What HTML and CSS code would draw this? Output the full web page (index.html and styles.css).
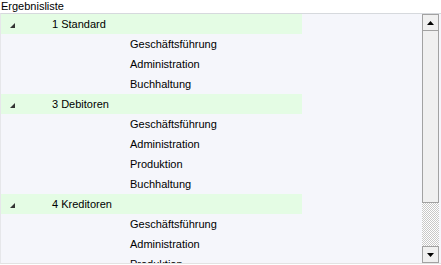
FILE: index.html
```html
<!doctype html>
<html>
<head>
	<title>Ergebnisliste</title>
	<meta charset="utf-8"/>
	<link rel="stylesheet" href="styles.css">
</head>
<body>

	<div class="caption">Ergebnisliste</div>

	<div class="panel">
		<div class="list">
			<div class="group">
				<svg class="toggle" width="5" height="5" viewBox="0 0 5 5"><polygon points="5,0 5,5 0,5"/></svg>
				<span>1 Standard</span>
			</div>
			<div class="item">Geschäftsführung</div>
			<div class="item">Administration</div>
			<div class="item">Buchhaltung</div>

			<div class="group">
				<svg class="toggle" width="5" height="5" viewBox="0 0 5 5"><polygon points="5,0 5,5 0,5"/></svg>
				<span>3 Debitoren</span>
			</div>
			<div class="item">Geschäftsführung</div>
			<div class="item">Administration</div>
			<div class="item">Produktion</div>
			<div class="item">Buchhaltung</div>

			<div class="group">
				<svg class="toggle" width="5" height="5" viewBox="0 0 5 5"><polygon points="5,0 5,5 0,5"/></svg>
				<span>4 Kreditoren</span>
			</div>
			<div class="item">Geschäftsführung</div>
			<div class="item">Administration</div>
			<div class="item">Produktion</div>
			<div class="item">Buchhaltung</div>
		</div>

		<div class="scrollbar">
			<div class="btn"><svg width="7" height="4" viewBox="0 0 7 4"><polygon points="3.5,0 7,4 0,4"/></svg></div>
			<div class="thumb"></div>
			<div class="track"></div>
			<div class="btn"><svg width="7" height="4" viewBox="0 0 7 4"><polygon points="0,0 7,0 3.5,4"/></svg></div>
		</div>
	</div>

</body>
</html>
```

FILE: styles.css
```css
* {
    margin: 0;
    box-sizing: border-box;
}

body {
    width: 441px;
    height: 265px;
    overflow: hidden;
    background-color: #fff;
    font-family: "Liberation Sans", Arial, sans-serif;
    font-size: 11px;
    color: #000;
}

.caption {
    height: 13px;
    line-height: 13px;
    padding-left: 1px;
}

.panel {
    display: flex;
    height: 251px;
    border-top: 1px solid #d6d9dd;
    border-left: 1px solid #e6e7ea;
    border-bottom: 1px solid #e3e3e3;
    background-color: #f5f6fb;
}

.list {
    flex: 1;
    overflow: hidden;
}

.group {
    display: flex;
    align-items: center;
    width: 301px;
    height: 20px;
    background-color: #e4fce4;
}

.toggle {
    margin: 2px 0 0 9px;
    fill: #333;
}

.group span {
    margin-left: 37px;
}

.item {
    height: 20px;
    line-height: 20px;
    padding-left: 129px;
}

.scrollbar {
    display: flex;
    flex-direction: column;
    width: 17px;
    margin-right: 2px;
}

.btn {
    display: flex;
    align-items: center;
    justify-content: center;
    height: 17px;
    border: 1px solid #a2a2a2;
    background-color: #f0f0f0;
}

.thumb {
    height: 172px;
    border: 1px solid #a2a2a2;
    border-top: none;
    background-color: #f0f0f0;
}

.track {
    flex: 1;
    background-color: #fff;
    background-image: repeating-conic-gradient(#c8c8c8 0 25%, #fff 0 50%);
    background-size: 2px 2px;
}
```
